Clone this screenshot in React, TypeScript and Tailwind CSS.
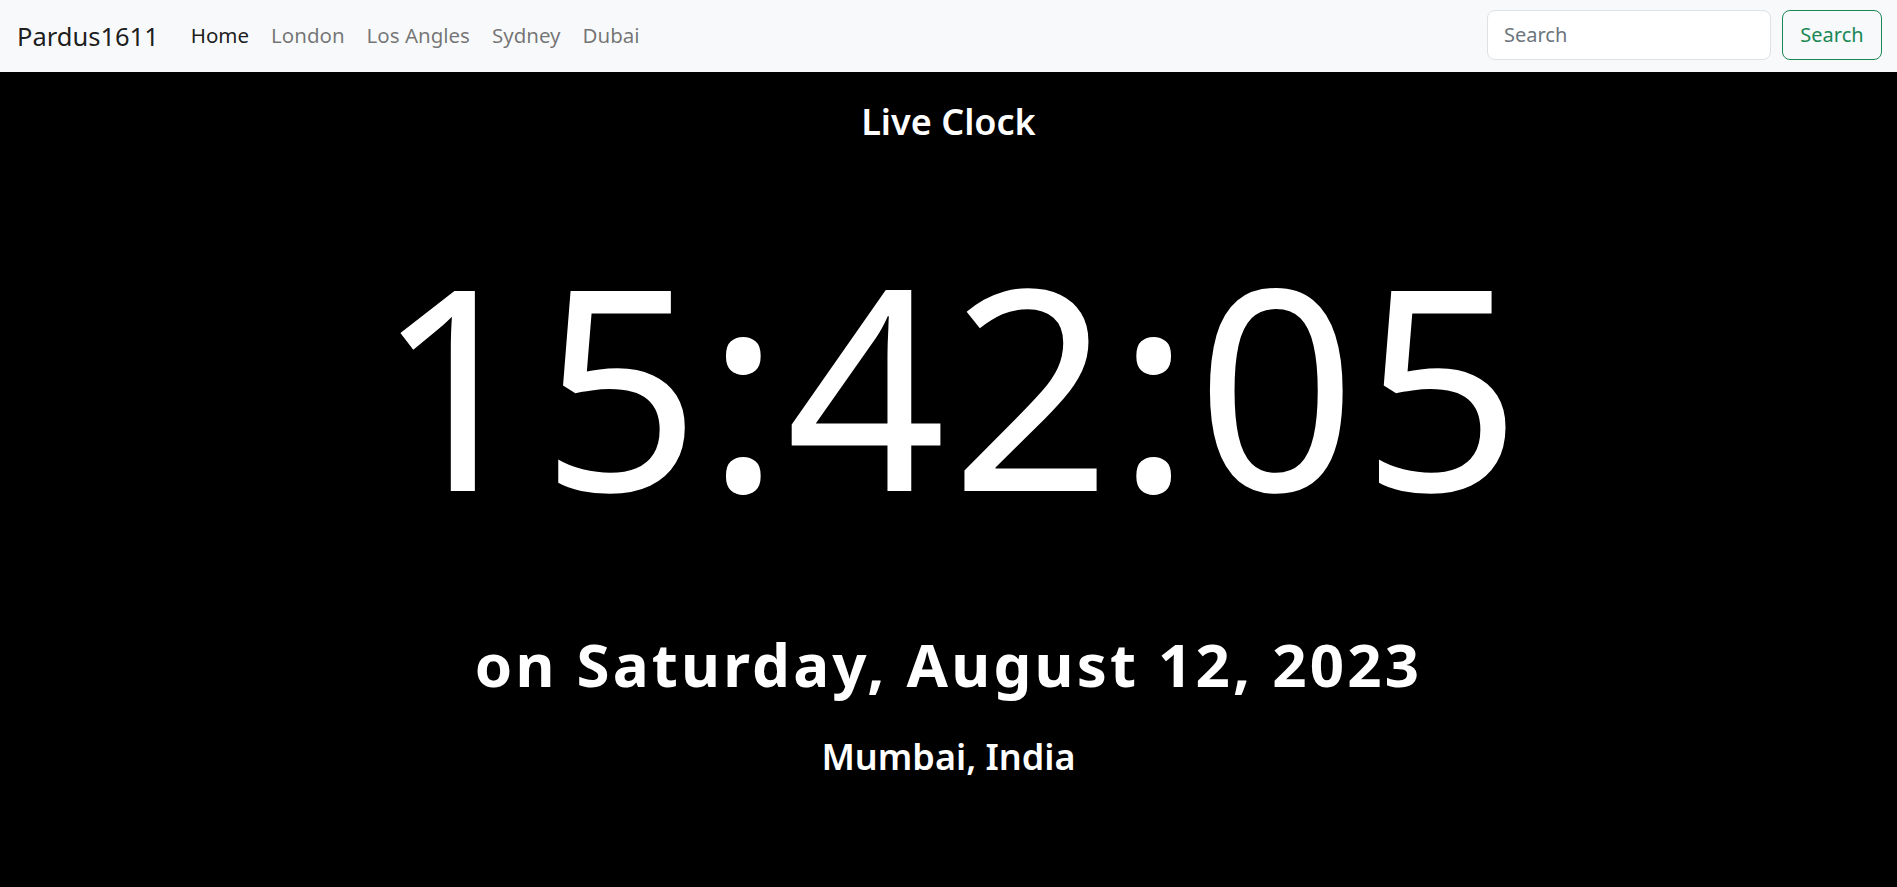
import React from "react";

export default function App() {
  const font = { fontFamily: '"Noto Sans", "Open Sans", sans-serif' };
  return (
    <div className="min-h-screen bg-black flex flex-col" style={font}>
      <nav className="h-[72px] bg-[#f8f9fa] flex items-center justify-between px-[15px]">
        <div className="flex items-center">
          <a className="text-[25.5px] leading-[36px] text-[rgba(0,0,0,0.9)] mr-[21px] pl-[2px] -mt-[1px]">Pardus1611</a>
          <ul className="flex items-center -mt-[1px]">
            <li className="px-[11px] text-[20.5px] text-[rgba(0,0,0,0.9)]">Home</li>
            <li className="px-[11px] text-[20.5px] text-[rgba(0,0,0,0.55)]">London</li>
            <li className="px-[11px] text-[20.5px] text-[rgba(0,0,0,0.55)]">Los Angles</li>
            <li className="px-[11px] text-[20.5px] text-[rgba(0,0,0,0.55)]">Sydney</li>
            <li className="px-[11px] text-[20.5px] text-[rgba(0,0,0,0.55)]">Dubai</li>
          </ul>
        </div>
        <form className="flex items-center gap-[11px] mt-[-3px]">
          <input
            type="search"
            placeholder="Search"
            className="w-[284px] h-[50px] bg-white border border-[#dee2e6] rounded-[8px] px-[16px] text-[20px] text-[#212529] placeholder:text-[#6c757d] outline-none"
            style={font}
          />
          <button
            type="button"
            className="w-[100px] h-[50px] border border-[#198754] rounded-[8px] text-[20px] text-[#198754] bg-transparent"
            style={font}
          >
            Search
          </button>
        </form>
      </nav>
      <main className="flex flex-col items-center text-white">
        <h2 className="mt-[26px] text-[36px] leading-[48px] font-semibold">Live Clock</h2>
        <div className="mt-[97px] text-[280px] leading-[280px] font-normal tracking-[5px] pl-[5px]">15:42:05</div>
        <h1 className="mt-[105px] text-[60px] leading-[72px] font-bold tracking-[3.2px]">on Saturday, August 12, 2023</h1>
        <h2 className="mt-[33px] text-[36px] leading-[48px] font-semibold">Mumbai, India</h2>
      </main>
    </div>
  );
}
